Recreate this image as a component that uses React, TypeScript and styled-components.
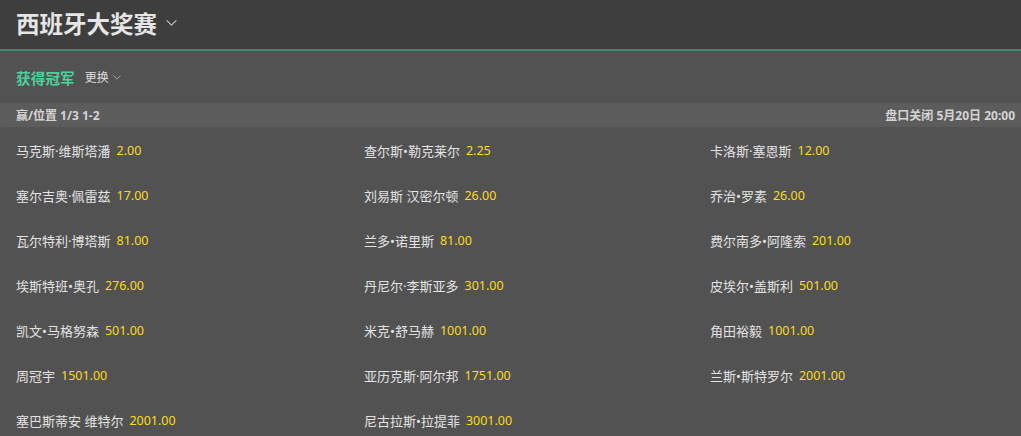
import styled, { createGlobalStyle } from "styled-components";

const GlobalStyle = createGlobalStyle`
  html, body {
    margin: 0;
    padding: 0;
    background: #525252;
  }
  body {
    font-family: "Noto Sans", "Noto Sans CJK SC", sans-serif;
  }
`;

const Page = styled.div`
  width: 1021px;
  height: 436px;
  overflow: hidden;
  background: #525252;
`;

const Header = styled.div`
  height: 51px;
  box-sizing: border-box;
  background: #3e3e3e;
  border-bottom: 2px solid #3a8a6c;
  display: flex;
  align-items: center;
  padding: 0 16px 4px;
  gap: 8px;
`;

const Title = styled.h1`
  margin: 0;
  font-size: 23.5px;
  font-weight: 700;
  color: #e6e6e6;
  font-family: "Noto Sans CJK SC", sans-serif;
`;

const Chevron = ({ size, color }: { size: number; color: string }) => (
  <svg width={size} height={size} viewBox="0 0 12 12" fill="none">
    <path d="M1.5 4l4.5 4.5L10.5 4" stroke={color} strokeWidth={1.1} />
  </svg>
);

const SubHeader = styled.div`
  height: 52px;
  display: flex;
  align-items: center;
  padding: 0 16px;
  gap: 10px;
`;

const MarketName = styled.span`
  font-size: 14.7px;
  font-weight: 700;
  color: #4ecf9b;
`;

const Switcher = styled.span`
  display: flex;
  align-items: center;
  gap: 3px;
  font-size: 12px;
  color: #dedede;
`;

const Band = styled.div`
  height: 24px;
  background: #5c5c5c;
  display: flex;
  align-items: center;
  justify-content: space-between;
  padding: 0 6px 0 16px;
  font-size: 12px;
  font-weight: 700;
  color: #d4d4d4;
`;

const Grid = styled.div`
  display: grid;
  grid-template-columns: 348px 346px 1fr;
  grid-auto-rows: 45px;
  padding-left: 16px;
  padding-top: 1px;
`;

const Cell = styled.div`
  display: flex;
  align-items: center;
  gap: 6px;
  font-size: 13px;
`;

const Name = styled.span`
  color: #e2e2e2;
`;

const Odds = styled.span`
  color: #fcdc1c;
  font-size: 12.5px;
`;

const runners: [string, string][] = [
  ["马克斯·维斯塔潘", "2.00"],
  ["查尔斯•勒克莱尔", "2.25"],
  ["卡洛斯·塞恩斯", "12.00"],
  ["塞尔吉奥·佩雷兹", "17.00"],
  ["刘易斯 汉密尔顿", "26.00"],
  ["乔治•罗素", "26.00"],
  ["瓦尔特利·博塔斯", "81.00"],
  ["兰多•诺里斯", "81.00"],
  ["费尔南多•阿隆索", "201.00"],
  ["埃斯特班•奥孔", "276.00"],
  ["丹尼尔·李斯亚多", "301.00"],
  ["皮埃尔•盖斯利", "501.00"],
  ["凯文•马格努森", "501.00"],
  ["米克•舒马赫", "1001.00"],
  ["角田裕毅", "1001.00"],
  ["周冠宇", "1501.00"],
  ["亚历克斯·阿尔邦", "1751.00"],
  ["兰斯•斯特罗尔", "2001.00"],
  ["塞巴斯蒂安 维特尔", "2001.00"],
  ["尼古拉斯•拉提菲", "3001.00"],
];

export default function App() {
  return (
    <Page>
      <GlobalStyle />
      <Header>
        <Title>西班牙大奖赛</Title>
        <Chevron size={13} color="#bdbdbd" />
      </Header>
      <SubHeader>
        <MarketName>获得冠军</MarketName>
        <Switcher>
          更换
          <Chevron size={10} color="#a8a8a8" />
        </Switcher>
      </SubHeader>
      <Band>
        <span>赢/位置 1/3 1-2</span>
        <span>盘口关闭 5月20日 20:00</span>
      </Band>
      <Grid>
        {runners.map(([name, odds]) => (
          <Cell key={name}>
            <Name>{name}</Name>
            <Odds>{odds}</Odds>
          </Cell>
        ))}
      </Grid>
    </Page>
  );
}
